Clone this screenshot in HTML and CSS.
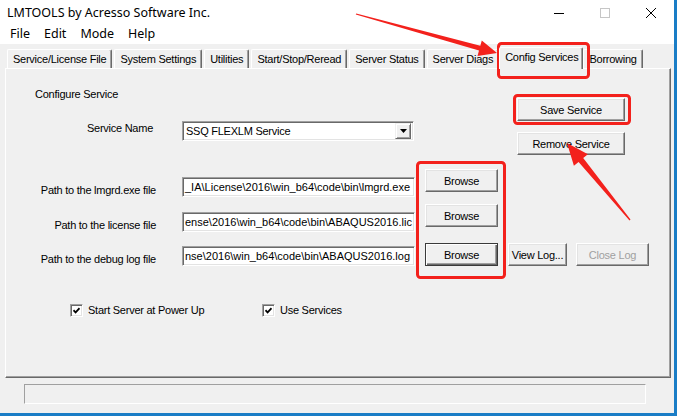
FILE: index.html
```html
<!DOCTYPE html>
<html>
<head>
	<meta charset="utf-8">
	<title>LMTOOLS by Acresso Software Inc.</title>
	<link rel="stylesheet" href="styles.css">
</head>
<body>
	<div class="window">
		<div class="titlebar">
			<span class="title">LMTOOLS by Acresso Software Inc.</span>
			<div class="controls">
				<span class="ctl"><svg width="10" height="10" viewBox="0 0 10 10"><path d="M0 5.5h10" stroke="#000" stroke-width="1"/></svg></span>
				<span class="ctl"><svg width="10" height="10" viewBox="0 0 10 10"><rect x="0.5" y="0.5" width="9" height="9" fill="none" stroke="#c6c6c6"/></svg></span>
				<span class="ctl"><svg width="10" height="10" viewBox="0 0 10 10"><path d="M0 0L10 10M10 0L0 10" stroke="#000" stroke-width="1"/></svg></span>
			</div>
		</div>
		<ul class="menubar">
			<li>File</li>
			<li>Edit</li>
			<li>Mode</li>
			<li>Help</li>
		</ul>
		<div class="client">
			<ul class="tabs">
				<li class="tab">Service/License File</li>
				<li class="tab">System Settings</li>
				<li class="tab">Utilities</li>
				<li class="tab">Start/Stop/Reread</li>
				<li class="tab">Server Status</li>
				<li class="tab">Server Diags</li>
				<li class="tab active">Config Services</li>
				<li class="tab">Borrowing</li>
			</ul>
			<div class="panel">
				<div class="top">
					<div class="service">
						<div class="heading">Configure Service</div>
						<div class="service-row">
							<span class="label">Service Name</span>
							<div class="combo">
								<span>SSQ FLEXLM Service</span>
								<span class="drop"><svg width="7" height="4" viewBox="0 0 7 4"><path d="M0 0h7L3.5 4z" fill="#000"/></svg></span>
							</div>
						</div>
					</div>
					<div class="actions">
						<button class="btn">Save Service</button>
						<button class="btn">Remove Service</button>
					</div>
				</div>
				<div class="paths">
					<div class="path-row">
						<span class="label">Path to the lmgrd.exe file</span>
						<div class="field">_IA\License\2016\win_b64\code\bin\lmgrd.exe</div>
						<button class="btn browse">Browse</button>
					</div>
					<div class="path-row second">
						<span class="label">Path to the license file</span>
						<div class="field">ense\2016\win_b64\code\bin\ABAQUS2016.lic</div>
						<button class="btn browse">Browse</button>
					</div>
					<div class="path-row last">
						<span class="label">Path to the debug log file</span>
						<div class="field">nse\2016\win_b64\code\bin\ABAQUS2016.log</div>
						<button class="btn browse default">Browse</button>
						<button class="btn view">View Log...</button>
						<button class="btn close-log" disabled>Close Log</button>
					</div>
				</div>
				<div class="checks">
					<label class="check first"><span class="box"><svg width="7" height="7" viewBox="0 0 7 7"><path d="M0.5 3.2L2.6 5.4L6.5 1.2" fill="none" stroke="#000" stroke-width="1.7"/></svg></span>Start Server at Power Up</label>
					<label class="check"><span class="box"><svg width="7" height="7" viewBox="0 0 7 7"><path d="M0.5 3.2L2.6 5.4L6.5 1.2" fill="none" stroke="#000" stroke-width="1.7"/></svg></span>Use Services</label>
				</div>
			</div>
			<div class="status"></div>
		</div>

		<!-- red annotation marks drawn over the window -->
		<svg class="marks" width="677" height="416" viewBox="0 0 677 416">
			<g fill="none" stroke="#f3211c" stroke-width="3">
				<rect x="498.5" y="43.5" width="90" height="34" rx="3"/>
				<rect x="514.5" y="95.5" width="115" height="28" rx="3"/>
				<rect x="417.5" y="162.5" width="87" height="115" rx="3"/>
			</g>
			<g fill="#f3211c">
				<polygon points="356.2,13.4 480.3,45.8 481.8,40.5 497,53 477.5,55.9 479,50.6 355.8,14.6"/>
				<polygon points="630.5,219.6 583.2,158.1 587.9,154.3 567,143 573.9,165.7 578.6,161.9 629.5,220.4"/>
			</g>
		</svg>
	</div>
</body>
</html>
```

FILE: styles.css
```css
*{
	box-sizing: border-box;
}
body{
	margin: 0;
	background-color: #f0f0f0;
	font-family: "Liberation Sans", Arial, sans-serif;
	font-size: 11px;
	letter-spacing: -0.25px;
	color: #000;
}
.window{
	position: relative;
	width: 677px;
	height: 416px;
	overflow: hidden;
	background-color: #f0f0f0;
	border-right: 3px solid #1a7dc6;
	border-bottom: 3px solid #1a7dc6;
}
.titlebar{
	display: flex;
	height: 24px;
	background-color: #fff;
	font-family: "Noto Sans", sans-serif;
	font-size: 12.5px;
	letter-spacing: 0;
}
.title{
	padding: 1px 0 0 7px;
	line-height: 23px;
}
.controls{
	display: flex;
	margin-left: auto;
}
.ctl{
	display: flex;
	align-items: center;
	justify-content: center;
	width: 46px;
	padding-top: 1px;
}
.menubar{
	display: flex;
	height: 20px;
	margin: 0;
	padding: 0 0 0 3px;
	list-style: none;
	background-color: #fff;
	font-family: "Noto Sans", sans-serif;
	font-size: 12.5px;
	letter-spacing: 0;
}
.menubar li{
	padding: 0 7px;
	line-height: 20px;
}
.client{
	padding-top: 3px;
}

/* tab strip */
.tabs{
	display: flex;
	align-items: flex-end;
	height: 21px;
	margin: 0;
	padding: 0 0 0 7px;
	list-style: none;
}
.tab{
	height: 19px;
	margin-right: 2px;
	padding: 0 5px;
	line-height: 18px;
	white-space: nowrap;
	border: 1px solid;
	border-bottom: 0;
	border-color: #fff #696969 transparent #fff;
	border-radius: 2px 2px 0 0;
	box-shadow: inset -1px 0 #a0a0a0;
}
.tab.active{
	position: relative;
	z-index: 1;
	height: 22px;
	margin: 0 0 -1px -2px;
	padding: 0 4px 0 5px;
	background-color: #f0f0f0;
}
.panel{
	width: 666px;
	height: 310px;
	margin-left: 5px;
	border: 1px solid;
	border-color: #fff #696969 #696969 #fff;
	box-shadow: inset -1px -1px #a0a0a0;
}

/* config service form */
.top{
	display: flex;
	height: 92px;
}
.service{
	padding-top: 18px;
}
.heading{
	margin-left: 29px;
	line-height: 14px;
}
.service-row{
	display: flex;
	margin-top: 20px;
}
.label{
	line-height: 14px;
	text-align: right;
	white-space: nowrap;
}
.service-row .label{
	width: 147px;
}
.combo,
.field{
	height: 20px;
	background-color: #fff;
	border: 1px solid;
	border-color: #a0a0a0 #fff #fff #a0a0a0;
	box-shadow: inset 1px 1px #696969, inset -1px -1px #e3e3e3;
}
.combo{
	display: flex;
	align-items: center;
	justify-content: space-between;
	width: 232px;
	margin-left: 29px;
	padding: 0 2px 0 3px;
}
.drop{
	display: flex;
	align-items: center;
	justify-content: center;
	width: 16px;
	height: 16px;
	background-color: #f0f0f0;
	border: 1px solid;
	border-color: #f0f0f0 #696969 #696969 #f0f0f0;
	box-shadow: inset 1px 1px #fff, inset -1px -1px #a0a0a0;
}
.actions{
	display: flex;
	flex-direction: column;
	margin-left: auto;
	margin-right: 45px;
	padding-top: 29px;
}
.btn{
	display: block;
	height: 23px;
	padding: 0;
	background-color: #f0f0f0;
	border: 1px solid;
	border-color: #fff #696969 #696969 #fff;
	box-shadow: inset -1px -1px #a0a0a0, inset 1px 1px #e3e3e3;
	font: inherit;
	letter-spacing: inherit;
	color: #000;
	text-align: center;
}
.actions .btn{
	width: 108px;
}
.actions .btn + .btn{
	margin-top: 11px;
}
.paths{
	padding-top: 8px;
}
.path-row{
	display: flex;
	align-items: flex-start;
}
.path-row .label{
	width: 150px;
	margin-top: 14px;
}
.field{
	width: 233px;
	margin: 8px 0 0 26px;
	padding: 0 2px;
	line-height: 18px;
	letter-spacing: 0;
	overflow: hidden;
	white-space: nowrap;
}
.path-row.second{
	margin-top: 7px;
}
.path-row.last{
	margin-top: 11px;
}
.path-row.last .label{
	margin-top: 9px;
}
.path-row.last .field{
	margin-top: 3px;
}
.browse{
	width: 73px;
	margin-left: 10px;
}
.browse.default{
	border-color: #3a3a3a;
	box-shadow: inset 1px 1px #fff, inset -1px -1px #696969, inset -2px -2px #a0a0a0;
}
.view{
	width: 59px;
	margin-left: 10px;
}
.close-log{
	width: 73px;
	margin-left: 9px;
}
.btn:disabled{
	color: #a0a0a0;
}
.checks{
	display: flex;
	margin-top: 37px;
	padding-left: 64px;
}
.check{
	display: flex;
	align-items: center;
	gap: 5px;
	line-height: 14px;
}
.check.first{
	width: 192px;
}
.box{
	display: flex;
	align-items: center;
	justify-content: center;
	width: 13px;
	height: 13px;
	background-color: #fff;
	border: 1px solid;
	border-color: #a0a0a0 #fff #fff #a0a0a0;
	box-shadow: inset 1px 1px #696969, inset -1px -1px #e3e3e3;
}
.status{
	width: 622px;
	height: 20px;
	margin: 6px 0 0 24px;
	border: 1px solid;
	border-color: #a0a0a0 #fff #fff #a0a0a0;
}
.marks{
	position: absolute;
	top: 0;
	left: 0;
	pointer-events: none;
}
```
